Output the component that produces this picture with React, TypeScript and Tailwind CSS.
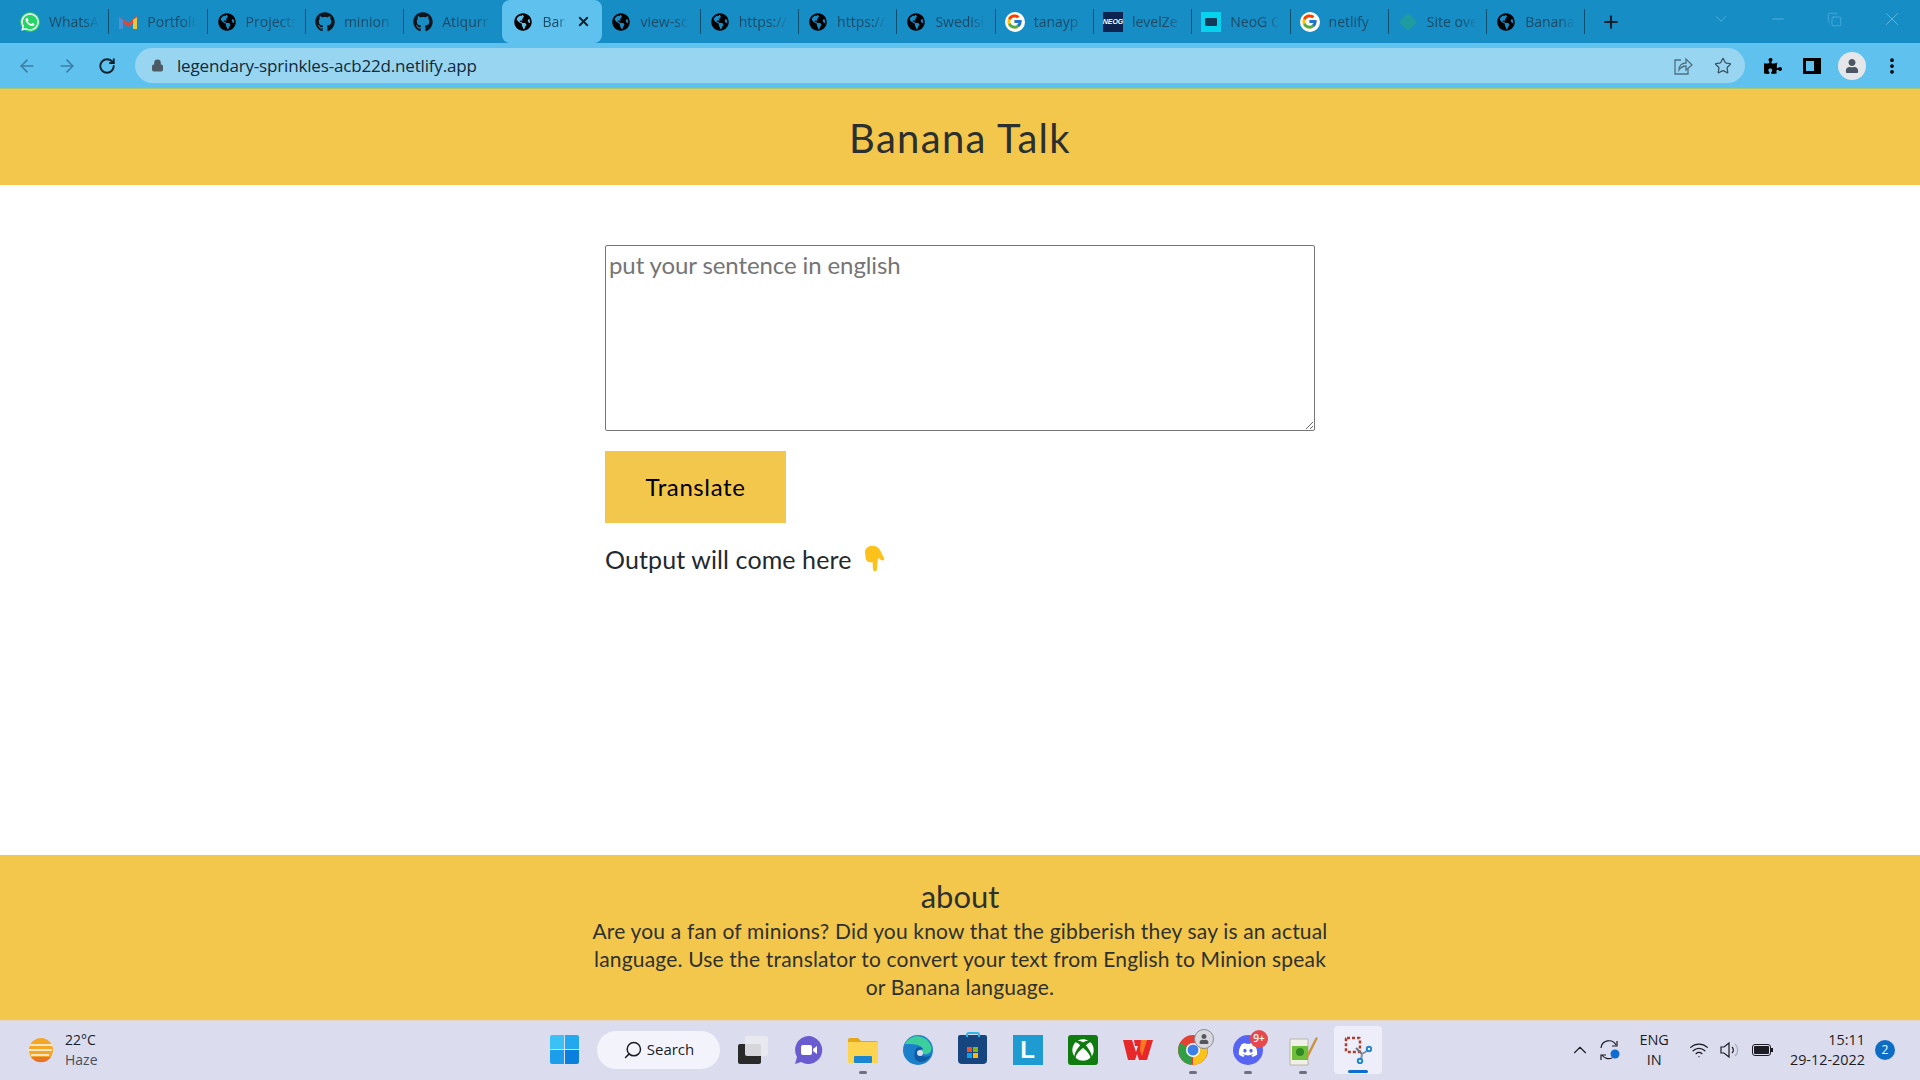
import React from 'react';
import { FaGlobeAmericas, FaGithub, FaWhatsapp, FaDiscord, FaXbox, FaPuzzlePiece, FaUser } from 'react-icons/fa';
import { FcGoogle } from 'react-icons/fc';
import { ArrowLeft, ArrowRight, RotateCw, Lock, Star, Plus, X, ChevronDown, ChevronUp, Minus, Copy, EllipsisVertical, Search, Wifi } from 'lucide-react';

const Globe = () => <FaGlobeAmericas className="text-black" size={18} />;

const GoogleIcon = () => (
  <span className="flex h-5 w-5 items-center justify-center rounded-full bg-white">
    <FcGoogle size={17} />
  </span>
);

const WhatsappIcon = () => (
  <span className="flex h-5 w-5 items-center justify-center rounded-full bg-[#25d366]">
    <FaWhatsapp className="text-white" size={20} />
  </span>
);

const GmailIcon = () => (
  <svg width="20" height="16" viewBox="0 0 20 16">
    <path d="M1 2l9 7 9-7v4l-9 7-9-7z" fill="#ea4335" />
    <path d="M1 3v12h4V6z" fill="#4a8fd8" />
    <path d="M19 3v12h-4V6z" fill="#e9c53a" />
  </svg>
);

const NeogIcon = () => (
  <span className="flex h-5 w-5 items-center justify-center bg-[#0d2350] text-[7px] font-black italic leading-none text-white [font-family:'Liberation_Sans',sans-serif]">
    NEOG
  </span>
);

const LevelIcon = () => (
  <span className="flex h-5 w-5 items-center justify-center bg-[#06d4ee]">
    <span className="h-2 w-3 rounded-[1px] bg-[#123a5a]" />
  </span>
);

const NetlifyIcon = () => (
  <svg width="20" height="20" viewBox="0 0 20 20">
    <path d="M10 1l9 9-9 9-9-9z" fill="#1f9c9f" />
  </svg>
);

const tabs = [
  { label: 'WhatsApp', icon: <WhatsappIcon /> },
  { label: 'Portfolio', icon: <GmailIcon /> },
  { label: 'Projects', icon: <Globe /> },
  { label: 'minion', icon: <FaGithub className="text-[#10151c]" size={20} /> },
  { label: 'Atiqurr', icon: <FaGithub className="text-[#10151c]" size={20} /> },
  { label: 'Banana', icon: <Globe />, active: true },
  { label: 'view-sc', icon: <Globe /> },
  { label: 'https://', icon: <Globe /> },
  { label: 'https://', icon: <Globe /> },
  { label: 'Swedish', icon: <Globe /> },
  { label: 'tanayp', icon: <GoogleIcon /> },
  { label: 'levelZe', icon: <NeogIcon /> },
  { label: 'NeoG C', icon: <LevelIcon /> },
  { label: 'netlify', icon: <GoogleIcon /> },
  { label: 'Site ove', icon: <NetlifyIcon /> },
  { label: 'Banana', icon: <Globe /> },
];

const TabBar = () => (
  <div className="flex h-[43px] items-end bg-[#178dc5] pl-[11px]">
    {tabs.map((tab, i) =>
      tab.active ? (
        <div key={i} className="flex h-[43px] w-[100px] shrink-0 items-center rounded-lg bg-[#5fc2ee] pl-[11px] pr-[11px]">
          <span className="flex w-5 shrink-0 justify-center">{tab.icon}</span>
          <span className="ml-[9px] w-[24px] overflow-hidden whitespace-nowrap text-sm text-[#1c4a66] [mask-image:linear-gradient(to_right,black_70%,transparent)]">
            {tab.label}
          </span>
          <X className="ml-auto text-[#10212e]" size={15} strokeWidth={3} />
        </div>
      ) : (
        <div key={i} className="flex h-[43px] w-[98.3px] shrink-0 items-center pl-[9px]">
          <span className="flex w-5 shrink-0 justify-center">{tab.icon}</span>
          <span className="ml-[9px] w-[50px] overflow-hidden whitespace-nowrap text-sm text-[#1c4a66] [mask-image:linear-gradient(to_right,black_70%,transparent)]">
            {tab.label}
          </span>
          {tabs[i + 1]?.active ? null : <span className="ml-auto h-[25px] w-px bg-[#0e4f70]" />}
        </div>
      ),
    )}
    <div className="flex h-[43px] w-[56px] items-center pl-[16px]">
      <Plus className="text-[#10212e]" size={20} strokeWidth={2.5} />
    </div>
    <div className="ml-auto flex h-[38px] items-center self-start text-[#63b9e2]">
      <span className="flex w-[57px] justify-center"><ChevronDown size={18} strokeWidth={1} /></span>
      <span className="flex w-[57px] justify-center"><Minus size={18} strokeWidth={1} /></span>
      <span className="flex w-[57px] justify-center"><Copy size={15} strokeWidth={1} /></span>
      <span className="flex w-[57px] justify-center"><X size={22} strokeWidth={1} /></span>
    </div>
  </div>
);

const ShareIcon = () => (
  <svg className="ml-auto" width="20" height="20" viewBox="0 0 20 20" fill="none" stroke="#4f6f83" strokeWidth="1.3">
    <path d="M8 4H2v14h13v-5" />
    <path d="M6 14c0-5 3-7 7-7V3l6 6-6 5v-4c-3 0-5 1-7 4z" />
  </svg>
);

const Toolbar = () => (
  <div className="flex h-[45px] items-center bg-[#5fc2ee]">
    <div className="flex w-[135px] shrink-0 items-center pl-[17px]">
      <ArrowLeft className="text-[#3b7fa6]" size={20} />
      <ArrowRight className="ml-[20px] text-[#3b7fa6]" size={20} />
      <RotateCw className="ml-[21px] text-[#10212e]" size={18} strokeWidth={2.5} />
    </div>
    <div className="flex h-[35px] w-[1610px] shrink-0 items-center rounded-full bg-[#97d5f0] pl-[16px]">
      <Lock className="text-[#4c5a64]" size={13} fill="#4c5a64" />
      <span className="ml-[13px] text-[17px] tracking-[-0.17px] text-[#102a3a]">legendary-sprinkles-acb22d.netlify.app</span>
      <ShareIcon />
      <Star className="ml-[21px] mr-[13px] text-[#3d5566]" size={18} strokeWidth={1.75} />
    </div>
    <div className="flex flex-1 items-center">
      <FaPuzzlePiece className="ml-[19px] text-black" size={18} />
      <span className="ml-[21px] flex h-[16px] w-[18px] justify-start border-[3px] border-black">
        <span className="ml-auto h-full w-[4px] bg-black" />
      </span>
      <span className="ml-[17px] flex h-7 w-7 items-center justify-center rounded-full bg-[#e4e6ea]">
        <FaUser className="text-[#4c5663]" size={14} />
      </span>
      <EllipsisVertical className="ml-[16px] text-black" size={20} strokeWidth={2.5} />
    </div>
  </div>
);

const PointDown = () => (
  <svg className="ml-[11px] shrink-0" width="24" height="28" viewBox="0 0 24 28">
    <path d="M6 2c3-2 9-2 12 3l4 8c1 2-1 3-3 2l-3-2 -1 11c0 3-4 3-4 0l-.5-7c-4 1-7-1-7-5L3 7c0-2 1-4 3-5z" fill="#fcc21b" />
  </svg>
);

const Banana = () => (
  <div className="flex flex-1 flex-col text-[#1f2a30] [font-family:Lato,'Noto_Sans',sans-serif]">
    <header className="flex h-[97px] items-center justify-center border-t border-[#a9c873] bg-[#f3c74c] pt-[2px]">
      <h1 className="text-[40px] leading-none tracking-[1.3px] text-[#2b2f2f]">Banana Talk</h1>
    </header>
    <main className="flex-1 bg-white">
      <div className="mx-auto w-[710px] pt-[60px]">
        <textarea
          readOnly
          placeholder="put your sentence in english"
          className="block h-[186px] w-full resize-y rounded-[2px] border border-[#767676] px-[3px] py-[2px] text-[24px] leading-[33px] tracking-[-0.1px] outline-none placeholder:text-[#757575]"
        />
        <button className="mt-[20px] block h-[72px] w-[181px] bg-[#f3c74c] text-[24px] tracking-[0.6px] text-black">Translate</button>
        <div className="mt-[19px] flex items-center text-[25px] leading-[34px] tracking-[0.1px]">
          Output will come here
          <PointDown />
        </div>
      </div>
    </main>
    <footer className="flex h-[165px] flex-col items-center bg-[#f3c74c] pt-[24px] text-[#2e3030]">
      <h2 className="text-[31px] leading-[34px]">about</h2>
      <p className="mt-[4px] w-[745px] text-center text-[21px] leading-[28px] tracking-[0.18px]">
        Are you a fan of minions? Did you know that the gibberish they say is an actual language. Use the translator to convert your text from English to Minion speak or Banana language.
      </p>
    </footer>
  </div>
);

const Dot = () => <span className="absolute bottom-[-5px] left-1/2 h-[3px] w-2 -translate-x-1/2 rounded-full bg-[#6f6f7d]" />;

const TaskIcon = ({ children, running }: { children: React.ReactNode; running?: boolean }) => (
  <span className="relative flex h-[38px] w-[55px] shrink-0 items-center justify-center">
    {children}
    {running && <Dot />}
  </span>
);

const WinLogo = () => (
  <span className="grid h-[29px] w-[29px] grid-cols-2 gap-[1px]">
    <span className="rounded-tl-[2px] bg-[#3cc1f4]" />
    <span className="rounded-tr-[2px] bg-[#21a8ee]" />
    <span className="rounded-bl-[2px] bg-[#1c9eea]" />
    <span className="rounded-br-[2px] bg-[#0a7fdc]" />
  </span>
);

const SyncIcon = () => (
  <svg className="ml-[7px]" width="24" height="24" viewBox="0 0 24 24" fill="none" stroke="#1c1c24" strokeWidth="1.2">
    <path d="M3 10a8 8 0 0 1 15-3" />
    <path d="M19 3v5h-5" />
    <path d="M14 20a8 8 0 0 1-10-3" />
    <path d="M3 22v-5h5" />
    <circle cx="17" cy="16" r="4.5" fill="#0f6cd0" stroke="none" />
  </svg>
);

const VolumeIcon = () => (
  <svg className="ml-[10px]" width="22" height="20" viewBox="0 0 22 20" fill="none" stroke="#1c1c24" strokeWidth="1.2">
    <path d="M2 7h3l5-4v14l-5-4H2z" />
    <path d="M13 7a4 4 0 0 1 0 6" />
    <path d="M16 4a8 8 0 0 1 0 12" stroke="#a9a9b8" />
  </svg>
);

const Taskbar = () => (
  <div className="flex h-[60px] items-center border-t border-[#e6d8c8] bg-[#dcdcef] pb-[2px] text-[#1c1c24] [font-family:'Open_Sans','Noto_Sans',sans-serif]">
    <div className="flex w-[550px] shrink-0 items-center pl-[27px]">
      <svg width="28" height="28" viewBox="0 0 28 28">
        <circle cx="14" cy="14" r="12" fill="#f4a726" />
        <path d="M4 21a12 12 0 0 0 20 0z" fill="#e8742a" />
        <path d="M3 9h23M1 14h24M4 19h18" stroke="#f6e6c4" strokeWidth="2" />
      </svg>
      <div className="ml-[10px] flex flex-col text-[14px] leading-[20px]">
        <span>22°C</span>
        <span className="text-[#4d4d5a]">Haze</span>
      </div>
    </div>
    <WinLogo />
    <div className="ml-[18px] flex h-[38px] w-[123px] shrink-0 items-center justify-center rounded-full bg-[#f3f3fb] text-[15px]">
      <Search size={20} strokeWidth={1.75} className="mr-[4px] -scale-x-100" />
      Search
    </div>
    <div className="ml-[5px] flex items-center">
      <TaskIcon>
        <span className="relative h-[28px] w-[30px]">
          <span className="absolute bottom-0 left-0 h-[20px] w-[23px] rounded-[2px] bg-[#2a2a2a]" />
          <span className="absolute right-0 top-0 h-[20px] w-[23px] rounded-[2px] bg-[#e9e9ee]/90" />
        </span>
      </TaskIcon>
      <TaskIcon>
        <svg width="30" height="30" viewBox="0 0 30 30">
          <path d="M15 1a14 14 0 1 1-7 26l-6 2 2-7A14 14 0 0 1 15 1z" fill="#6a5bd0" />
          <rect x="8" y="10" width="11" height="10" rx="2" fill="#fff" />
          <path d="M20 14l4-3v8l-4-3z" fill="#fff" />
        </svg>
      </TaskIcon>
      <TaskIcon running>
        <svg width="30" height="28" viewBox="0 0 30 28">
          <path d="M0 4a2 2 0 0 1 2-2h8l3 3h15a2 2 0 0 1 2 2v3H0z" fill="#e6a817" />
          <rect y="6" width="30" height="21" rx="1" fill="#fcd44f" />
          <rect x="6" y="20" width="18" height="7" rx="1" fill="#1c86d1" />
        </svg>
      </TaskIcon>
      <TaskIcon>
        <svg width="30" height="30" viewBox="0 0 30 30">
          <circle cx="15" cy="15" r="15" fill="#1b7fc9" />
          <path d="M2 9a14 14 0 0 1 26 2c2 6-3 9-7 8s-2-4-1-5c-3-6-14-5-18-5z" fill="#3ccf9c" />
          <path d="M12 16c0-4 6-5 8-2-5-1-6 5-1 7 3 1 7 1 9-1-3 6-10 9-15 5-2-2-2-6-1-9z" fill="#0f5aa5" />
          <circle cx="17" cy="18" r="3" fill="#dcdcef" />
        </svg>
      </TaskIcon>
      <TaskIcon>
        <span className="relative flex h-[29px] w-[29px] flex-col items-center justify-end rounded-b-[4px] rounded-t-[2px] bg-[#16457f] pb-[6px]">
          <span className="absolute -top-[3px] h-[5px] w-[14px] rounded-t-[3px] border-2 border-b-0 border-[#2fb6e8]" />
          <span className="grid h-[11px] w-[11px] grid-cols-2 gap-[1px]">
            <span className="bg-[#f25022]" />
            <span className="bg-[#7fba00]" />
            <span className="bg-[#00a4ef]" />
            <span className="bg-[#ffb900]" />
          </span>
        </span>
      </TaskIcon>
      <TaskIcon>
        <span className="flex h-[30px] w-[30px] items-center justify-center bg-[#1e9bd0] text-[24px] font-bold leading-none text-white [font-family:'Liberation_Sans',sans-serif]">L</span>
      </TaskIcon>
      <TaskIcon>
        <span className="flex h-[30px] w-[30px] items-center justify-center rounded-[3px] bg-[#107c10]">
          <FaXbox className="text-white" size={22} />
        </span>
      </TaskIcon>
      <TaskIcon>
        <svg width="30" height="24" viewBox="0 0 30 24">
          <path d="M0 2h9l4 12 2-6h-3l-1-6h19l-6 20h-8l-2-6-2 6H5z" fill="#e8272b" />
          <path d="M18 2h6l-5 16-2-6z" fill="#ff7a1f" />
        </svg>
      </TaskIcon>
      <TaskIcon running>
        <svg width="30" height="30" viewBox="0 0 30 30">
          <circle cx="15" cy="15" r="15" fill="#e34133" />
          <path d="M15 15L28 8a15 15 0 0 1-13 22z" fill="#f9c31c" />
          <path d="M15 15l-2 15A15 15 0 0 1 2 8z" fill="#2f9e44" />
          <circle cx="15" cy="15" r="7" fill="#fff" />
          <circle cx="15" cy="15" r="5.5" fill="#3e7fe8" />
        </svg>
        <span className="absolute right-[6px] top-[-2px] flex h-5 w-5 items-center justify-center rounded-full border border-[#8a8a92] bg-[#d8d8de]">
          <FaUser className="text-[#55565e]" size={10} />
        </span>
      </TaskIcon>
      <TaskIcon running>
        <span className="flex h-[30px] w-[30px] items-center justify-center rounded-full bg-[#5865f2]">
          <FaDiscord className="text-white" size={20} />
        </span>
        <span className="absolute right-[7px] top-[-1px] flex h-[18px] w-[18px] items-center justify-center rounded-full bg-[#e5484d] text-[10px] font-semibold text-white">9+</span>
      </TaskIcon>
      <TaskIcon running>
        <svg width="30" height="32" viewBox="0 0 30 32">
          <path d="M2 5h18v26H2z" fill="#f0f0e6" stroke="#b8b8aa" />
          <rect x="4" y="12" width="16" height="14" fill="#6fbf3a" />
          <circle cx="12" cy="18" r="4" fill="#2f8a26" />
          <path d="M18 22L28 3l2 1-10 20z" fill="#c8953e" />
        </svg>
      </TaskIcon>
      <span className="relative ml-[4px] flex h-12 w-12 shrink-0 items-center justify-center rounded-[4px] bg-[#eeeefa]">
        <svg width="28" height="28" viewBox="0 0 28 28" fill="none">
          <rect x="2" y="2" width="14" height="14" rx="1" stroke="#a83e2c" strokeWidth="2.5" strokeDasharray="3 2" />
          <path d="M12 12l6 6" stroke="#6b7280" strokeWidth="2" />
          <path d="M18 18l-1 6M18 18l5-3" stroke="#8a8f98" strokeWidth="2" />
          <circle cx="16" cy="25" r="2.2" stroke="#1c86d1" strokeWidth="2" />
          <circle cx="25" cy="13" r="2.2" stroke="#1c86d1" strokeWidth="2" />
        </svg>
        <span className="absolute bottom-[1px] left-1/2 h-[3px] w-5 -translate-x-1/2 rounded-full bg-[#0f6cd0]" />
      </span>
    </div>
    <div className="ml-auto flex items-center pr-[25px]">
      <ChevronUp size={22} strokeWidth={1.25} />
      <SyncIcon />
      <div className="ml-[17px] flex flex-col items-center text-[14.5px] leading-[20px]">
        <span>ENG</span>
        <span>IN</span>
      </div>
      <Wifi className="ml-[20px]" size={20} strokeWidth={1.5} />
      <VolumeIcon />
      <span className="ml-[11px] flex items-center">
        <span className="flex h-[12px] w-[19px] items-center rounded-[3px] border-[1.5px] border-[#1c1c24] p-[1px]">
          <span className="h-full w-full rounded-[1px] bg-[#1c1c24]" />
        </span>
        <span className="h-[4px] w-[2px] bg-[#1c1c24]" />
      </span>
      <div className="ml-[17px] flex flex-col items-end text-[14.4px] leading-[20px]">
        <span>15:11</span>
        <span>29-12-2022</span>
      </div>
      <span className="ml-[10px] flex h-5 w-5 items-center justify-center rounded-full bg-[#0f6cc4] text-[12px] text-white">2</span>
    </div>
  </div>
);

const App: React.FC = () => (
  <div className="flex h-[1080px] flex-col overflow-hidden [font-family:'Open_Sans','Noto_Sans',sans-serif]">
    <TabBar />
    <Toolbar />
    <Banana />
    <Taskbar />
  </div>
);

export default App;
